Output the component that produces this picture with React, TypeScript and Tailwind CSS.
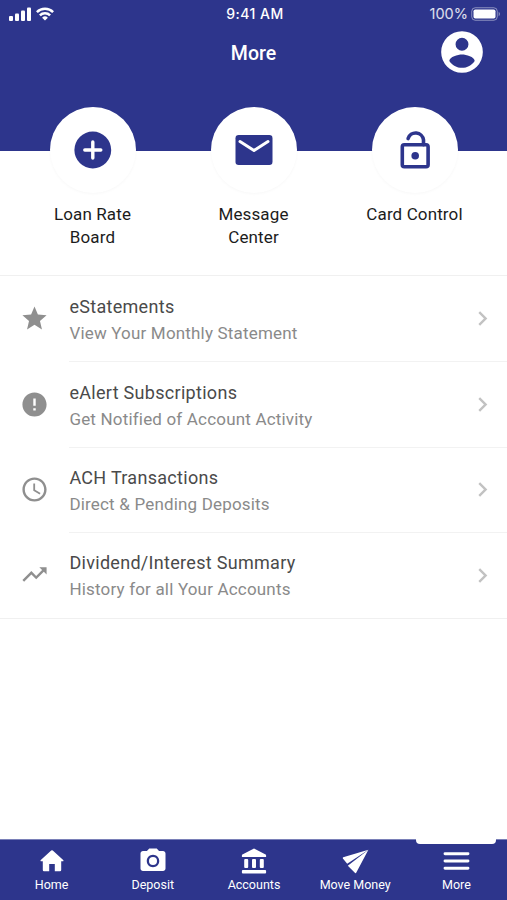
import type { ReactNode } from 'react';
import { clsx } from 'clsx';
import {
  MdAccessTime,
  MdCameraAlt,
  MdChevronRight,
  MdError,
  MdStar,
  MdTrendingUp,
} from 'react-icons/md';

function SignalIcon() {
  return (
    <svg width="22" height="14" viewBox="0 0 22 14" fill="currentColor">
      <rect x="0" y="9" width="4" height="5" rx="1" />
      <rect x="6" y="6.5" width="4" height="7.5" rx="1" />
      <rect x="12" y="3.5" width="4" height="10.5" rx="1" />
      <rect x="18" y="0.5" width="4" height="13.5" rx="1" />
    </svg>
  );
}

function WifiIcon() {
  return (
    <svg
      width="18"
      height="14"
      viewBox="0 0 18 14"
      fill="none"
      stroke="currentColor"
      strokeWidth="2.5"
    >
      <path d="M.9 5.2a11.5 11.5 0 0 1 16.2 0" />
      <path d="M3.9 8.4a7.2 7.2 0 0 1 10.2 0" />
      <path d="M9 13.6 6.1 10.7a4.1 4.1 0 0 1 5.8 0Z" fill="currentColor" stroke="none" />
    </svg>
  );
}

function BatteryIcon() {
  return (
    <svg width="30" height="14" viewBox="0 0 30 14" fill="none">
      <rect x="0.75" y="0.75" width="25.5" height="12.5" rx="3.5" stroke="#fff" strokeOpacity="0.45" />
      <rect x="2.5" y="2.5" width="22" height="9" rx="1.8" fill="#fff" />
      <path d="M27.7 4.8c1.6.7 1.6 3.7 0 4.4z" fill="#fff" fillOpacity="0.5" />
    </svg>
  );
}

function AccountIcon() {
  return (
    <svg width="50" height="50" viewBox="0 0 24 24" fill="currentColor">
      <path d="M12 2a10 10 0 1 0 0 20 10 10 0 0 0 0-20zm0 3.2a3.1 3.1 0 1 1 0 6.2 3.1 3.1 0 0 1 0-6.2zm0 14.4c-2.5 0-4.8-1.3-6.1-3.3.1-2 4.1-3.1 6.1-3.1s6 1.1 6.1 3.1c-1.3 2-3.6 3.3-6.1 3.3z" />
    </svg>
  );
}

function PlusCircleIcon() {
  return (
    <svg width="38" height="38" viewBox="0 0 38 38">
      <circle cx="18.8" cy="19" r="18.4" fill="currentColor" />
      <path d="M18.8 11v16M10.8 19h16" stroke="#fff" strokeWidth="3.4" strokeLinecap="round" />
    </svg>
  );
}

function MailIcon() {
  return (
    <svg width="38" height="30" viewBox="0 0 38 30">
      <rect x="0.5" y="0" width="37" height="30" rx="3.2" fill="currentColor" />
      <path
        d="M5 6.6 19 15.4 33 6.6"
        fill="none"
        stroke="#fff"
        strokeWidth="3"
        strokeLinecap="round"
        strokeLinejoin="round"
      />
    </svg>
  );
}

function UnlockIcon() {
  return (
    <svg
      width="30"
      height="39"
      viewBox="0 0 30 39"
      fill="none"
      stroke="currentColor"
      strokeWidth="3.6"
      className="-mt-0.5"
    >
      <rect x="2.3" y="14.8" width="25.8" height="22" rx="2" />
      <path d="M8.1 8.6a7.9 7.9 0 0 1 15.4 1.3v4.9" strokeLinecap="round" />
      <circle cx="15.2" cy="25.8" r="3.8" fill="currentColor" stroke="none" />
    </svg>
  );
}

function HomeIcon() {
  return (
    <svg width="24" height="22" viewBox="0 0 24 22" fill="currentColor">
      <path d="M11.2.6a1.2 1.2 0 0 1 1.6 0L23.2 10c.5.5.3 1.3-.4 1.3h-1.6V20a1.2 1.2 0 0 1-1.2 1.2h-5.2V14H9.2v7.2H4A1.2 1.2 0 0 1 2.8 20v-8.7H1.2c-.7 0-.9-.8-.4-1.3z" />
    </svg>
  );
}

function BankIcon() {
  return (
    <svg width="26" height="26" viewBox="0 0 26 26" fill="currentColor">
      <path d="M13 .5 24.6 6.6a.9.9 0 0 1 .5.8v1.5H.9V7.4c0-.3.2-.6.5-.8z" />
      <rect x="3.2" y="11" width="4" height="9" rx="1" />
      <rect x="11" y="11" width="4" height="9" rx="1" />
      <rect x="18.8" y="11" width="4" height="9" rx="1" />
      <rect x="0.9" y="22" width="24.2" height="3.6" rx="1" />
    </svg>
  );
}

function SendIcon() {
  return (
    <svg width="27" height="25" viewBox="0 0 27 25" fill="currentColor">
      <path d="M26.4.8 1.2 8.3c-.5.2-.6.7-.3 1.1l4.3 5.4z" />
      <path d="M26.4.8 5.8 16.8l7.3 7.2c.4.4.9.3 1.1-.2z" />
    </svg>
  );
}

function MenuIcon() {
  return (
    <svg width="27" height="18" viewBox="0 0 27 18" stroke="currentColor" strokeWidth="2.9" strokeLinecap="round">
      <path d="M2 1.8h23M2 9h23M2 16.2h23" />
    </svg>
  );
}

const quickActions: { label: string; icon: ReactNode }[] = [
  { label: 'Loan Rate Board', icon: <PlusCircleIcon /> },
  { label: 'Message Center', icon: <MailIcon /> },
  { label: 'Card Control', icon: <UnlockIcon /> },
];

const links = [
  { title: 'eStatements', subtitle: 'View Your Monthly Statement', icon: MdStar },
  { title: 'eAlert Subscriptions', subtitle: 'Get Notified of Account Activity', icon: MdError },
  { title: 'ACH Transactions', subtitle: 'Direct & Pending Deposits', icon: MdAccessTime },
  { title: 'Dividend/Interest Summary', subtitle: 'History for all Your Accounts', icon: MdTrendingUp },
];

const tabs: { label: string; icon: ReactNode; active?: boolean }[] = [
  { label: 'Home', icon: <HomeIcon /> },
  { label: 'Deposit', icon: <MdCameraAlt size={30} /> },
  { label: 'Accounts', icon: <BankIcon /> },
  { label: 'Move Money', icon: <SendIcon /> },
  { label: 'More', icon: <MenuIcon />, active: true },
];

function StatusBar() {
  return (
    <div className="grid h-[27px] grid-cols-[1fr_auto_1fr] items-center pr-1.5 pl-[9px] font-['Inter','Roboto',sans-serif]">
      <div className="flex items-center gap-[5px]">
        <SignalIcon />
        <WifiIcon />
      </div>
      <span className="text-center text-[14px] font-medium tracking-[0.45px]">9:41 AM</span>
      <div className="flex items-center justify-end gap-[3px]">
        <span className="text-[14.5px] text-white/85">100%</span>
        <BatteryIcon />
      </div>
    </div>
  );
}

export default function App() {
  return (
    <div className="flex h-[900px] w-[507px] flex-col overflow-hidden bg-white font-['Roboto',sans-serif]">
      <header className="h-[151px] shrink-0 bg-[#2d358c] text-white">
        <StatusBar />
        <div className="grid h-[50px] grid-cols-[1fr_auto_1fr] items-center px-5">
          <h1 className="col-start-2 pt-1 text-[19.5px] font-medium">More</h1>
          <button className="justify-self-end">
            <AccountIcon />
          </button>
        </div>
      </header>

      <section className="-mt-11 grid h-[169px] shrink-0 grid-cols-3 border-b border-[#f0f0f0] px-[12px]">
        {quickActions.map((action) => (
          <button key={action.label} className="flex flex-col items-center">
            <span className="flex size-[86px] shrink-0 items-center justify-center rounded-full bg-white text-[#2d358c] shadow-[0_1px_3px_rgba(0,0,0,0.03)]">
              {action.icon}
            </span>
            <span className="mt-2.5 w-[110px] text-[17px] leading-[22.5px] tracking-[0.12px] text-[#1c1c1c]">
              {action.label}
            </span>
          </button>
        ))}
      </section>

      <ul className="shrink-0 border-b border-[#f0f0f0]">
        {links.map((item, index) => (
          <li key={item.title} className="flex h-[85.4px] items-stretch">
            <div className="flex w-[69.4px] items-center justify-center text-[#8f8f8f]">
              <item.icon size={29} />
            </div>
            <div
              className={clsx(
                'flex flex-1 items-center justify-between pr-[10px]',
                index > 0 && 'border-t border-[#f2f2f2]',
              )}
            >
              <div className="pt-[2px]">
                <div className="text-[18px] leading-[26px] tracking-[0.3px] text-[#4a4a4a]">{item.title}</div>
                <div className="text-[17px] leading-[26px] tracking-[0.18px] text-[#8a8a8a]">{item.subtitle}</div>
              </div>
              <MdChevronRight size={29} className="text-[#c2c2c2]" />
            </div>
          </li>
        ))}
      </ul>

      <nav className="mt-auto grid h-[61px] shrink-0 grid-cols-5 border-t border-[#7a80b8] bg-[#2d358c] pl-px text-white">
        {tabs.map((tab) => (
          <button key={tab.label} className="relative flex flex-col items-center">
            {tab.active && <span className="absolute -top-px h-[5px] w-[80px] rounded-b-[4px] bg-white" />}
            <span className="mt-1.5 flex h-[30px] items-center">{tab.icon}</span>
            <span className="text-[12.5px] leading-[18px] whitespace-nowrap">{tab.label}</span>
          </button>
        ))}
      </nav>
    </div>
  );
}
